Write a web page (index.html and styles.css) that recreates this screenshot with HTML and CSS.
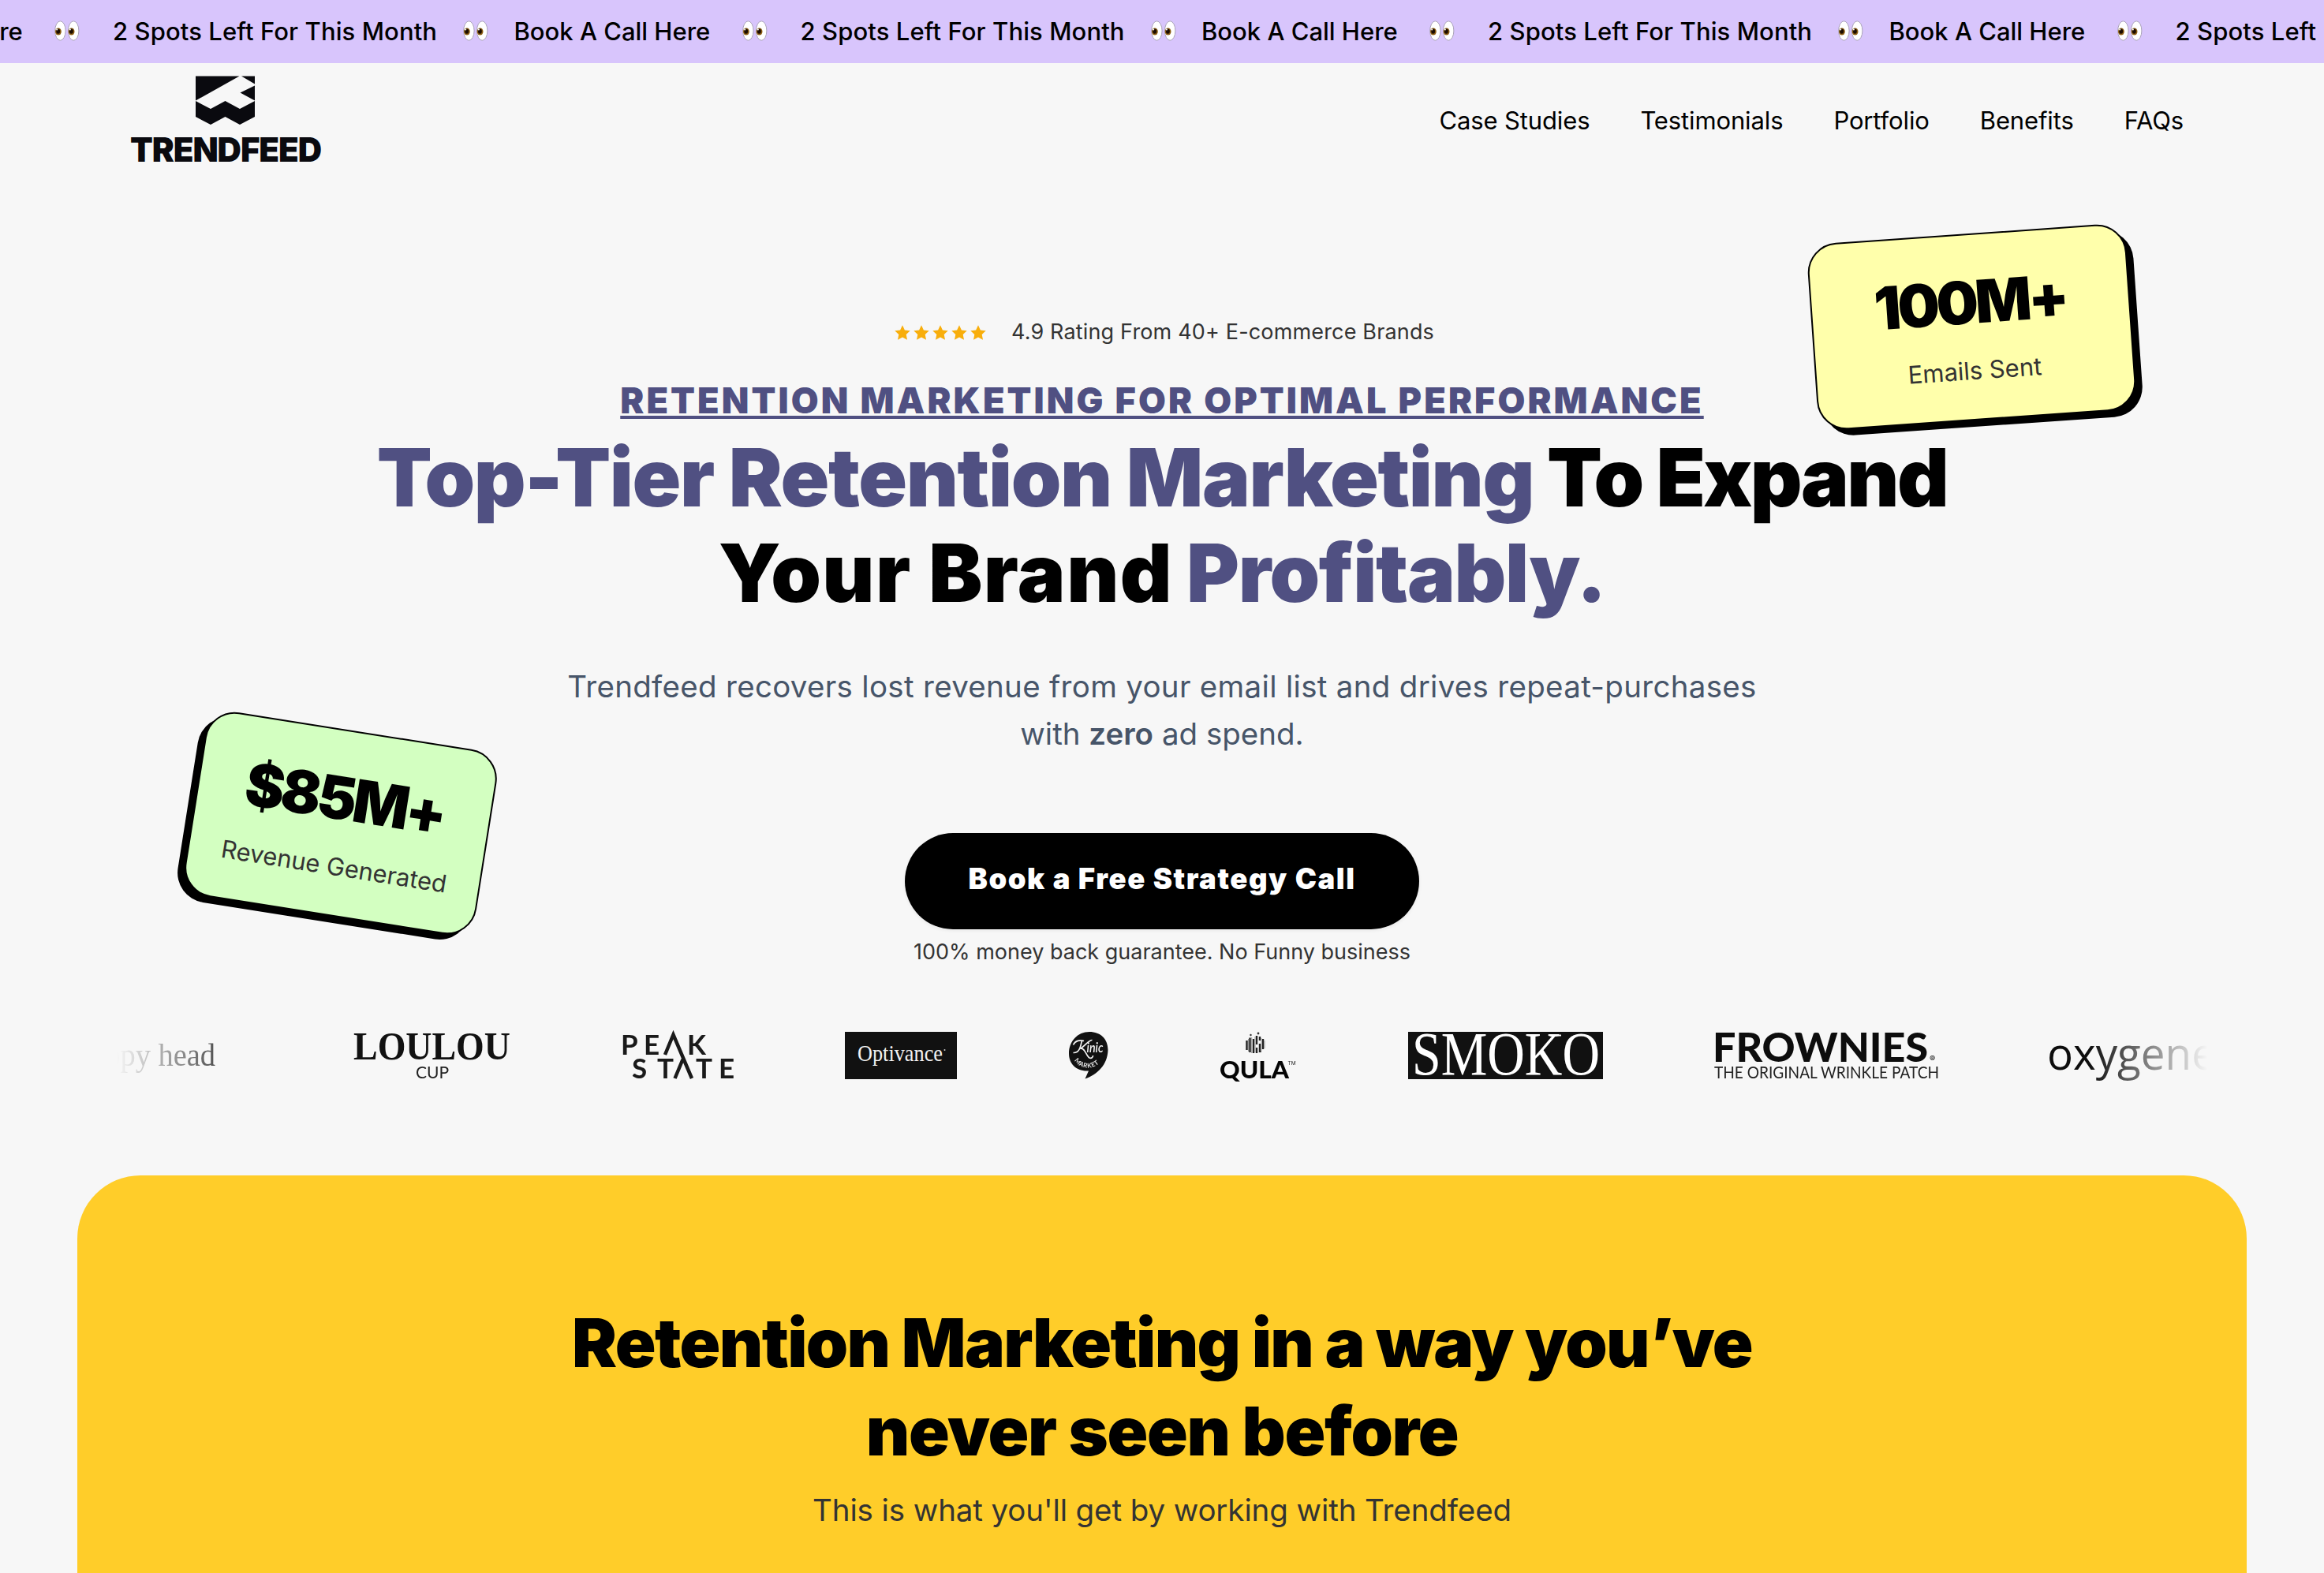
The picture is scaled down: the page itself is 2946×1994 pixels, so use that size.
FILE: index.html
```html
<!DOCTYPE html>
<html lang="en">
<head>
<meta charset="utf-8">
<title>Trendfeed</title>
<link rel="stylesheet" href="styles.css">
</head>
<body>
<svg class="defs" aria-hidden="true">
  <symbol id="eyes" viewBox="0 0 32 26">
    <g fill="#fff" stroke="#a9a2b8" stroke-width="1">
      <ellipse cx="7.4" cy="13" rx="6.7" ry="12.2"/>
      <ellipse cx="24.2" cy="13" rx="6.7" ry="12.2"/>
    </g>
    <ellipse cx="4.9" cy="14" rx="3.9" ry="4.6" fill="#8a5a10"/>
    <ellipse cx="21.6" cy="14" rx="3.9" ry="4.6" fill="#8a5a10"/>
    <ellipse cx="4.7" cy="13.6" rx="2.4" ry="3.2" fill="#1c0d02"/>
    <ellipse cx="21.4" cy="13.6" rx="2.4" ry="3.2" fill="#1c0d02"/>
    <circle cx="3.2" cy="11.6" r="1" fill="#fff"/>
    <circle cx="19.9" cy="11.6" r="1" fill="#fff"/>
  </symbol>
  <symbol id="star" viewBox="0 0 20 19">
    <path fill="#f8ae0b" d="M10 0.3l2.9 6.2 6.8.8-5 4.7 1.3 6.8L10 15.5l-6 3.3 1.3-6.8-5-4.7 6.8-.8z"/>
  </symbol>
</svg>

<div class="marquee">
  <div class="marquee-group">
    <span class="book">Book A Call Here</span><svg class="eyes eyes-a"><use href="#eyes"/></svg><span class="spots">2 Spots Left For This Month</span><svg class="eyes eyes-b"><use href="#eyes"/></svg>
  </div>
  <div class="marquee-group">
    <span class="book">Book A Call Here</span><svg class="eyes eyes-a"><use href="#eyes"/></svg><span class="spots">2 Spots Left For This Month</span><svg class="eyes eyes-b"><use href="#eyes"/></svg>
  </div>
  <div class="marquee-group">
    <span class="book">Book A Call Here</span><svg class="eyes eyes-a"><use href="#eyes"/></svg><span class="spots">2 Spots Left For This Month</span><svg class="eyes eyes-b"><use href="#eyes"/></svg>
  </div>
  <div class="marquee-group">
    <span class="book">Book A Call Here</span><svg class="eyes eyes-a"><use href="#eyes"/></svg><span class="spots">2 Spots Left</span>
  </div>
</div>

<header class="header">
  <svg class="logo" viewBox="0 0 240 114" role="img" aria-label="Trendfeed">
    <g fill="#0a0a0f" transform="translate(82 .5)">
      <path d="M0 0H55.5L0 31zM58 0H75V10zM75 12V31L56.500 21z"/>
      <path d="M0 31.500L19 41.500 37.500 31.500 56 41.500 75 31.500V51.500L56 61.500 37.500 51.500 19 61.500 0 51.500z"/>
    </g>
    <text class="logo-word" x="-1" y="108.500" textLength="243">TRENDFEED</text>
  </svg>
  <nav class="nav">
    <a>Case Studies</a><a>Testimonials</a><a>Portfolio</a><a>Benefits</a><a>FAQs</a>
  </nav>
</header>

<main class="hero">
  <div class="rating">
    <div class="stars">
      <svg class="star"><use href="#star"/></svg><svg class="star"><use href="#star"/></svg><svg class="star"><use href="#star"/></svg><svg class="star"><use href="#star"/></svg><svg class="star"><use href="#star"/></svg>
    </div>
    <span class="rating-text">4.9 Rating From 40+ E-commerce Brands</span>
  </div>
  <h2 class="eyebrow">RETENTION MARKETING FOR OPTIMAL PERFORMANCE</h2>
  <h1 class="title">
    <span class="line"><span class="accent t1">Top-Tier Retention Marketing</span><span class="t2">To Expand</span></span>
    <span class="line"><span class="t3">Your Brand</span><span class="accent t4">Profitably.</span></span>
  </h1>
  <p class="lead"><span class="lead-1">Trendfeed recovers lost revenue from your email list and drives repeat-purchases</span><br>with <b>zero</b> ad spend.</p>
  <a class="cta">Book a Free Strategy Call</a>
  <p class="guarantee">100% money back guarantee. No Funny business</p>

  <div class="stat stat-emails">
    <div class="stat-value">100M+</div>
    <div class="stat-label">Emails Sent</div>
  </div>
  <div class="stat stat-revenue">
    <div class="stat-value">$85M+</div>
    <div class="stat-label">Revenue Generated</div>
  </div>
</main>

<section class="brands">
  <svg class="brand" width="176" height="60" viewBox="0 0 176 60">
    <text class="serif-light" x="0" y="42.500" textLength="176" lengthAdjust="spacingAndGlyphs">happy head</text>
  </svg>
  <svg class="brand loulou" width="199" height="60" viewBox="0 0 199 60">
    <text class="loulou-name" x="0" y="35" textLength="199" lengthAdjust="spacingAndGlyphs">LOULOU</text>
    <text class="loulou-sub" x="79" y="58.700" textLength="42">CUP</text>
  </svg>
  <svg class="brand" width="141" height="60" viewBox="0 0 141 60">
    <g class="peak">
      <text x="-2" y="29" textLength="49">PE</text>
      <text x="82" y="29" textLength="26">K</text>
      <text x="12" y="58.700" textLength="53">ST</text>
      <text x="93" y="58.700" textLength="49">TE</text>
    </g>
    <path d="M54 29L64.500 3.500 88 59M66.500 59L76.500 35" fill="none" stroke="#1a1a1a" stroke-width="4.500"/>
  </svg>
  <svg class="brand" width="142" height="60" viewBox="0 0 142 60">
    <rect width="142" height="60" fill="#111"/>
    <text class="optivance" x="16" y="37" textLength="108" lengthAdjust="spacingAndGlyphs">Optivance</text>
    <circle cx="126.500" cy="23" r="1" fill="#ccc"/>
  </svg>
  <svg class="brand" width="50" height="60" viewBox="0 0 50 60">
    <path d="M26 0C40 0 49.500 9 49.500 23 49 42 36 54 20.500 59.500L25 49.500C9 50.500 0 40 0 27.500 0 12 11 0 26 0z" fill="#111"/>
    <path d="M5.500 16.500C8 11 14 10 19 11.500M16.500 11C15 17 14 27 5.500 26.500M29.500 10.500C26 10 22 16 14.500 21.500 20 19 22 31 26 33 29 34 30.500 32 30.500 30" fill="none" stroke="#f4f4f4" stroke-width="1.700"/>
    <text class="kinic" x="22.500" y="26" textLength="21" lengthAdjust="spacingAndGlyphs">inic</text>
    <path id="arc" d="M7 36C13 48 34 50 43 34" fill="none"/>
    <text class="kinic-sub"><textPath href="#arc" textLength="36">MARKET</textPath></text>
  </svg>
  <svg class="brand" width="96" height="60" viewBox="0 0 96 60">
    <g stroke="#222" stroke-width="2.400">
      <path d="M33.500 11V23M37.500 7.500V26M42 9V27M46 5V16M50 15V26M54 9V22M46 20V27M50 6V11"/>
    </g>
    <g fill="#333"><circle cx="38.500" cy="4" r="1.200"/><circle cx="48" cy="2" r="1.400"/><circle cx="51" cy="25" r="1"/></g>
    <g stroke="#999" stroke-width="1"><path d="M35.500 9V25M39.700 7V27M44 6V26M52 8V24M56 11V21"/></g>
    <text class="qula" x="-1" y="59.300" textLength="88" lengthAdjust="spacingAndGlyphs">QULA</text>
    <text class="tm" x="85.500" y="42" textLength="10">TM</text>
  </svg>
  <svg class="brand" width="247" height="60" viewBox="0 0 247 60">
    <rect width="247" height="60" fill="#111"/>
    <text class="smoko" x="5" y="54" textLength="238" lengthAdjust="spacingAndGlyphs">SMOKO</text>
    <path d="M180 4.500H194" stroke="#fff" stroke-width="2"/>
  </svg>
  <svg class="brand frownies" width="283" height="60" viewBox="0 0 283 60">
    <text class="frownies-name" x="-3" y="38.300" textLength="273" lengthAdjust="spacingAndGlyphs">FROWNIES</text>
    <text class="reg" x="272" y="38" textLength="9">®</text>
    <text class="frownies-sub" x="-1" y="59" textLength="285" lengthAdjust="spacingAndGlyphs">THE ORIGINAL WRINKLE PATCH</text>
  </svg>
  <svg class="brand" width="210" height="60" viewBox="0 0 210 60">
    <text class="oxygene" x="-3" y="48" textLength="214" lengthAdjust="spacingAndGlyphs">oxygene</text>
  </svg>
</section>

<section class="panel">
  <h2 class="panel-title"><span class="p1">Retention Marketing in a way you’ve</span><br>never seen before</h2>
  <p class="panel-sub">This is what you'll get by working with Trendfeed</p>
</section>
</body>
</html>
```
FILE: styles.css
```css
* { box-sizing: border-box; margin: 0; padding: 0; }

body {
  width: 2946px;
  height: 1994px;
  overflow: hidden;
  position: relative;
  display: flex;
  flex-direction: column;
  background: #f7f7f7;
  color: #000;
  font-family: Inter, "Liberation Sans", sans-serif;
}

.defs { display: none; }

/* Announcement bar */
.marquee {
  flex: none;
  display: flex;
  height: 80px;
  overflow: hidden;
  background: #d8c5fc;
  font-size: 31px;
  font-weight: 500;
  line-height: 80px;
  white-space: nowrap;
}
.marquee-group { flex: none; display: flex; align-items: center; width: 871.5px; }
.marquee-group:first-child { margin-left: -220px; }
.book { flex: none; width: 289px; }
.spots { flex: none; width: 444px; letter-spacing: 0.1px; }
.eyes { flex: none; width: 32px; height: 26px; margin-top: -3px; }
.eyes-a { margin-right: 42px; }
.eyes-b { margin-right: 32px; }

/* Header */
.header {
  flex: none;
  display: flex;
  align-items: center;
  justify-content: space-between;
  height: 146px;
  padding: 0 178px 0 166px;
}
.logo { width: 240px; height: 114px; overflow: visible; }
.logo-word { font-size: 42px; font-weight: 900; fill: #0a0a0f; }
.nav { display: flex; gap: 64px; font-size: 31px; line-height: 40px; letter-spacing: -0.13px; }

/* Hero */
.hero {
  flex: none;
  display: flex;
  flex-direction: column;
  align-items: center;
  padding-top: 175px;
}
.rating { display: flex; align-items: center; gap: 32px; height: 40px; padding-left: 6px; }
.stars { display: flex; gap: 4px; }
.star { width: 20px; height: 19px; }
.rating-text { font-size: 27px; line-height: 40px; letter-spacing: 0.16px; color: #333; }

.eyebrow {
  margin-top: 37px;
  font-size: 45px;
  font-weight: 900;
  line-height: 60px;
  letter-spacing: 3.1px;
  color: #505082;
  text-decoration: underline;
  text-decoration-thickness: 4px;
  text-underline-offset: 3px;
  text-decoration-skip-ink: none;
}

.title { margin-top: 7px; font-size: 102px; font-weight: 900; line-height: 121px; white-space: nowrap; }
.line { display: flex; justify-content: center; gap: 17px; }
.accent { color: #505082; }
.t1 { letter-spacing: -1.4px; }
.t2 { letter-spacing: -2.6px; }
.t3 { letter-spacing: 1.4px; }
.t4 { letter-spacing: -1.3px; }

.lead { margin-top: 53px; font-size: 38.5px; line-height: 60px; text-align: center; color: #475569; }
.lead-1 { letter-spacing: 0.3px; }
.lead b { font-weight: 600; }

.cta {
  width: 652px;
  height: 122px;
  margin-top: 96px;
  border-radius: 61px;
  background: #000;
  color: #fff;
  font-size: 36.5px;
  font-weight: 900;
  line-height: 116px;
  letter-spacing: 1.55px;
  text-align: center;
  box-shadow: 0 2px 4px rgba(0, 0, 0, 0.06);
}
.guarantee { margin-top: 9px; font-size: 27px; line-height: 40px; color: #333; }

/* Tilted stat cards floating over the hero */
.stat {
  position: absolute;
  height: 237px;
  border: 2px solid #000;
  border-radius: 38px;
  text-align: center;
  white-space: nowrap;
}
.stat-emails {
  left: 2297px;
  top: 296px;
  width: 405px;
  background: #ffffab;
  box-shadow: 8px 8px 0 #000;
  transform: rotate(-4deg);
}
.stat-revenue {
  left: 245px;
  top: 925px;
  width: 374px;
  background: #d3ffc1;
  box-shadow: -8px 8px 0 #000;
  transform: rotate(9deg);
}
.stat-value { margin-top: 45px; font-size: 75px; font-weight: 900; line-height: 80px; letter-spacing: -4.2px; }
.stat-label { margin-top: 24px; font-size: 31px; line-height: 46px; color: #333; }

/* Brand strip, faded at both ends */
.brands {
  flex: none;
  display: flex;
  align-items: center;
  gap: 141.8px;
  width: 2650px;
  height: 120px;
  margin: 51px 0 0 148px;
  overflow: hidden;
  -webkit-mask-image: linear-gradient(90deg, transparent 0, #000 150px, #000 2500px, transparent 2650px);
  mask-image: linear-gradient(90deg, transparent 0, #000 150px, #000 2500px, transparent 2650px);
}
.brand { flex: none; display: block; overflow: visible; }
.brand:first-child { margin-left: -51px; }
.loulou { margin-left: 33px; }
.serif-light { font: 400 39px "Liberation Serif", serif; fill: #333; }
.loulou-name { font: 700 50px "Liberation Serif", serif; fill: #111; }
.loulou-sub { font: 400 21px Lato, sans-serif; fill: #222; }
.peak text { font: 700 35px Lato, sans-serif; fill: #1a1a1a; }
.optivance { font: 400 29px "Liberation Serif", serif; fill: #f2f2f2; }
.kinic { font: italic 600 18px Lato, sans-serif; fill: #f4f4f4; }
.kinic-sub { font: 700 8px Lato, sans-serif; fill: #e8e8e8; }
.qula { font: 900 30px Lato, sans-serif; fill: #050505; }
.tm { font: 400 6.5px Inter, sans-serif; fill: #222; }
.smoko { font: 400 78px "Liberation Serif", serif; fill: #fff; }
.frownies-name { font: 900 52px Lato, sans-serif; fill: #0d0d0d; }
.frownies-sub { font: 400 21.5px Lato, sans-serif; fill: #222; }
.reg { font: 700 11px Inter, sans-serif; fill: #222; }
.oxygene { font: 400 56px "Open Sans", sans-serif; fill: #0d0d0d; }

/* Yellow panel */
.panel {
  flex: 1;
  margin: 92px 98px 0;
  padding-top: 156px;
  border-radius: 80px 80px 0 0;
  background: #ffcd29;
  text-align: center;
}
.panel-title { font-size: 85.5px; font-weight: 900; line-height: 112px; letter-spacing: -1.3px; }
.p1 { letter-spacing: -1.65px; }
.panel-sub { margin-top: 14px; font-size: 38.5px; line-height: 60px; letter-spacing: -0.1px; color: #333; }
```
